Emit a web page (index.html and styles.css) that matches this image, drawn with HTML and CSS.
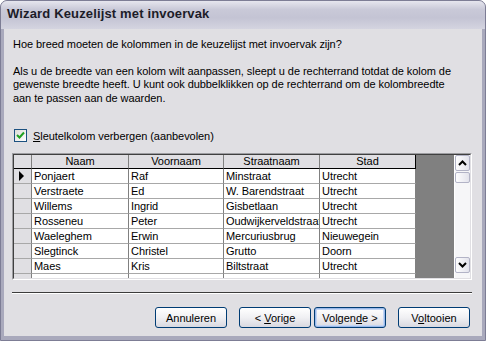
FILE: index.html
```html
<!doctype html>
<html>
<head>
    <title>Wizard Keuzelijst met invoervak</title>
    <link rel="stylesheet" href="styles.css">
</head>
<body>
    <div class="venster">
        <div class="titelbalk">Wizard Keuzelijst met invoervak</div>
        <div class="inhoud">
            <p class="vraag">Hoe breed moeten de kolommen in de keuzelijst met invoervak zijn?</p>
            <p class="uitleg">Als u de breedte van een kolom wilt aanpassen, sleept u de rechterrand totdat de kolom de<br>gewenste breedte heeft. U kunt ook dubbelklikken op de rechterrand om de kolombreedte<br>aan te passen aan de waarden.</p>

            <label class="keuze">
                <span class="vakje">
                    <svg width="9" height="9" viewBox="0 0 9 9"><path d="M1 4 L3.5 6.5 L8 1.5" fill="none" stroke="#21a121" stroke-width="2"/></svg>
                </span>
                <span><u>S</u>leutelkolom verbergen (aanbevolen)</span>
            </label>

            <div class="raster">
                <div class="raster-binnen">
                    <div class="blad">
                        <div class="rij kop">
                            <div class="cel kiezer"></div>
                            <div class="cel">Naam</div>
                            <div class="cel">Voornaam</div>
                            <div class="cel">Straatnaam</div>
                            <div class="cel laatste">Stad</div>
                        </div>
                        <div class="rij">
                            <div class="cel kiezer"><span class="pijl"></span></div>
                            <div class="cel">Ponjaert</div>
                            <div class="cel">Raf</div>
                            <div class="cel">Minstraat</div>
                            <div class="cel">Utrecht</div>
                        </div>
                        <div class="rij">
                            <div class="cel kiezer"></div>
                            <div class="cel">Verstraete</div>
                            <div class="cel">Ed</div>
                            <div class="cel">W. Barendstraat</div>
                            <div class="cel">Utrecht</div>
                        </div>
                        <div class="rij">
                            <div class="cel kiezer"></div>
                            <div class="cel">Willems</div>
                            <div class="cel">Ingrid</div>
                            <div class="cel">Gisbetlaan</div>
                            <div class="cel">Utrecht</div>
                        </div>
                        <div class="rij">
                            <div class="cel kiezer"></div>
                            <div class="cel">Rosseneu</div>
                            <div class="cel">Peter</div>
                            <div class="cel">Oudwijkerveldstraat</div>
                            <div class="cel">Utrecht</div>
                        </div>
                        <div class="rij">
                            <div class="cel kiezer"></div>
                            <div class="cel">Waeleghem</div>
                            <div class="cel">Erwin</div>
                            <div class="cel">Mercuriusbrug</div>
                            <div class="cel">Nieuwegein</div>
                        </div>
                        <div class="rij">
                            <div class="cel kiezer"></div>
                            <div class="cel">Slegtinck</div>
                            <div class="cel">Christel</div>
                            <div class="cel">Grutto</div>
                            <div class="cel">Doorn</div>
                        </div>
                        <div class="rij">
                            <div class="cel kiezer"></div>
                            <div class="cel">Maes</div>
                            <div class="cel">Kris</div>
                            <div class="cel">Biltstraat</div>
                            <div class="cel">Utrecht</div>
                        </div>
                        <div class="rij deels">
                            <div class="cel kiezer"></div>
                            <div class="cel">Bakelandt</div>
                            <div class="cel">Jan</div>
                            <div class="cel">Kerkstraat</div>
                            <div class="cel">Houten</div>
                        </div>
                    </div>
                    <div class="leeg"></div>
                    <div class="schuif">
                        <div class="knop">
                            <svg width="9" height="6" viewBox="0 0 9 6"><path d="M1 5 L4.5 1.5 L8 5" fill="none" stroke="#000" stroke-width="2"/></svg>
                        </div>
                        <div class="duim"></div>
                        <div class="spoor"></div>
                        <div class="knop">
                            <svg width="9" height="6" viewBox="0 0 9 6"><path d="M1 1 L4.5 4.5 L8 1" fill="none" stroke="#000" stroke-width="2"/></svg>
                        </div>
                        <div class="rest"></div>
                    </div>
                </div>
            </div>

            <div class="scheiding"></div>

            <div class="knoppen">
                <button class="annuleren">Annuleren</button>
                <button>&lt; <u>V</u>orige</button>
                <button class="standaard">Volgen<u>d</u>e &gt;</button>
                <button class="voltooien">V<u>o</u>ltooien</button>
            </div>
        </div>
    </div>
</body>
</html>
```

FILE: styles.css
```css
* {
    margin: 0;
    padding: 0;
    box-sizing: border-box;
}

body {
    background: #fff;
    font: 11px "Liberation Sans", Arial, sans-serif;
    color: #000;
}

.venster {
    width: 486px;
    height: 341px;
    background: #a9a9bc;
    border-radius: 7px 7px 0 0;
    border: 1px solid #7d7d95;
    display: flex;
    flex-direction: column;
    overflow: hidden;
}

.titelbalk {
    height: 28px;
    padding: 5px 0 0 6px;
    font: bold 13px "Liberation Sans", Arial, sans-serif;
    letter-spacing: 0.15px;
    color: #1c1c28;
    background: linear-gradient(#e6e6ee, #c9c9d8 30%, #c4c4d4 60%, #d4d4e0);
}

.inhoud {
    flex: 1;
    margin: 0 3px 4px 3px;
    background: #e0dfe3;
    padding: 9px 10px 8px 8px;
    display: flex;
    flex-direction: column;
    letter-spacing: -0.06px;
}

.vraag {
    line-height: 13px;
    padding-left: 1px;
}

.uitleg {
    margin-top: 14px;
    line-height: 13.5px;
    padding-left: 1px;
}

.keuze {
    margin-top: 24px;
    display: flex;
    align-items: center;
    gap: 6px;
    height: 13px;
    padding-left: 2px;
}

.vakje {
    width: 13px;
    height: 13px;
    border: 1px solid #1c5180;
    background: linear-gradient(135deg, #dcdcd7, #fff);
    display: flex;
    align-items: center;
    justify-content: center;
}

.raster {
    margin-top: 11px;
    border: 1px solid;
    border-color: #9d9da1 #fff #fff #9d9da1;
}

.raster-binnen {
    border: 1px solid;
    border-color: #404040 #e0dfe3 #e0dfe3 #404040;
    height: 125px;
    display: flex;
    overflow: hidden;
}

.blad {
    width: 402px;
    background: #fff;
}

.rij {
    display: grid;
    grid-template-columns: 18px 97px 95px 96px 96px;
    height: 15px;
}

.cel {
    border-right: 1px solid #808080;
    border-bottom: 1px solid #a8a8a8;
    padding: 0 2px;
    line-height: 14px;
    white-space: nowrap;
    overflow: hidden;
}

.deels .cel {
    padding-top: 2px;
}

.kop {
    height: 14px;
}

.kop .cel {
    background: #e0dfe3;
    text-align: center;
    line-height: 13px;
    border-bottom-color: #000;
}

.kop .laatste {
    border-right-color: #000;
}

.kiezer {
    background: #e0dfe3;
    display: flex;
    align-items: center;
    padding-left: 5px;
}

.pijl {
    width: 0;
    height: 0;
    border-top: 5px solid transparent;
    border-bottom: 5px solid transparent;
    border-left: 5px solid #000;
}

.leeg {
    flex: 1;
    background: #808080;
}

.schuif {
    width: 16px;
    background: #f6f6f8;
    display: flex;
    flex-direction: column;
    border-left: 1px solid #fff;
}

.knop,
.duim {
    height: 16px;
    border: 1px solid #b2b3c6;
    border-radius: 2px;
    background: linear-gradient(90deg, #fdfdfe, #e3e3ec);
    display: flex;
    align-items: center;
    justify-content: center;
}

.duim {
    height: 11px;
    margin-top: 1px;
}

.spoor {
    flex: 1;
}

.rest {
    height: 5px;
}

.scheiding {
    margin-top: 12px;
    height: 2px;
    border-top: 1px solid #3c3c3c;
    border-bottom: 1px solid #fff;
}

.knoppen {
    margin-top: 13px;
    display: flex;
    justify-content: flex-end;
    padding-right: 2px;
}

.knoppen button {
    width: 72px;
    height: 21px;
    font: 11px "Liberation Sans", Arial, sans-serif;
    color: #000;
    border: 1px solid #003c74;
    border-radius: 3px;
    background: linear-gradient(#fff, #f0f0f3 50%, #d8d8e0);
    margin-left: 3px;
}

.knoppen .annuleren {
    margin-right: 9px;
}

.knoppen .voltooien {
    margin-left: 12px;
}

.knoppen .standaard {
    box-shadow: inset 0 0 0 1px #99b9ea, inset 0 0 0 2px #c3d6f4;
}
```
